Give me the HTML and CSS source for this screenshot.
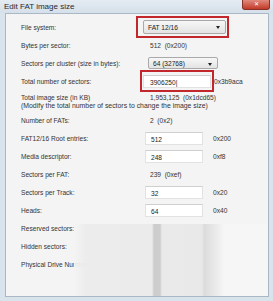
FILE: index.html
```html
<!DOCTYPE html>
<html lang="en">
  <head>
    <meta charset="UTF-8" />
    <title>Edit FAT image size</title>
    <link rel="stylesheet" href="styles.css">
  </head>
  <body>
    <div class="window">
      <header class="titlebar">
        <span class="title">Edit FAT image size</span>
        <span class="close">&#x2715;</span>
      </header>
      <section class="frame">
        <div class="content">
          <div class="row">
            <span class="label">File system:</span>
            <span class="mark">
              <span class="select select-wide">FAT 12/16<i class="arrow"></i></span>
            </span>
          </div>
          <div class="row">
            <span class="label">Bytes per sector:</span>
            <span class="value">512 &nbsp;(0x200)</span>
          </div>
          <div class="row">
            <span class="label">Sectors per cluster (size in bytes):</span>
            <span class="select select-small">64 (32768)<i class="arrow"></i></span>
          </div>
          <div class="row">
            <span class="label">Total number of sectors:</span>
            <span class="mark mark-input">
              <span class="input input-wide">3906250|</span>
            </span>
            <span class="hex hex-tight">0x3b9aca</span>
          </div>
          <div class="row row-short">
            <span class="label">Total image size (in KB)</span>
            <span class="value">1,953,125 &nbsp;(0x1dcd65)</span>
          </div>
          <div class="note">(Modify the total number of sectors to change the image size)</div>
          <div class="row">
            <span class="label">Number of FATs:</span>
            <span class="value">2 &nbsp;(0x2)</span>
          </div>
          <div class="row">
            <span class="label">FAT12/16 Root entries:</span>
            <span class="input">512</span>
            <span class="hex">0x200</span>
          </div>
          <div class="row">
            <span class="label">Media descriptor:</span>
            <span class="input">248</span>
            <span class="hex">0xf8</span>
          </div>
          <div class="row">
            <span class="label">Sectors per FAT:</span>
            <span class="value">239 &nbsp;(0xef)</span>
          </div>
          <div class="row">
            <span class="label">Sectors per Track:</span>
            <span class="input">32</span>
            <span class="hex">0x20</span>
          </div>
          <div class="row">
            <span class="label">Heads:</span>
            <span class="input">64</span>
            <span class="hex">0x40</span>
          </div>
          <div class="row">
            <span class="label">Reserved sectors:</span>
          </div>
          <div class="row">
            <span class="label">Hidden sectors:</span>
          </div>
          <div class="row">
            <span class="label">Physical Drive Number:</span>
          </div>
        </div>
        <!-- the dialog is fading out in the lower right corner -->
        <div class="fade"></div>
      </section>
    </div>
  </body>
</html>
```

FILE: styles.css
```css
html {
  box-sizing: border-box;
  font-family: "Liberation Sans", Arial, sans-serif;
  font-size: 6.6px;
}

*,
*:before,
*:after {
  box-sizing: inherit;
}

body {
  margin: 0;
  background: #fff;
}

.window {
  width: 273px;
  height: 301px;
  display: flex;
  flex-direction: column;
  background: #d9e3ec;
}

.titlebar {
  height: 13px;
  display: flex;
  justify-content: space-between;
  align-items: flex-start;
  background: linear-gradient(#e4ebf2, #d6e0ea);
  color: #1d2a36;
}

.title {
  padding: 2px 0 0 4px;
  font-size: 8px;
}

.close {
  width: 28px;
  height: 10px;
  margin-right: 3px;
  background: linear-gradient(#e08a7c, #c23a28);
  border: 1px solid #8a3026;
  border-top: 0;
  border-radius: 0 0 3px 3px;
  color: #fff;
  font-size: 6px;
  text-align: center;
  line-height: 9px;
}

/* frame around the dialog contents */
.frame {
  position: relative;
  flex-grow: 1;
  margin: 0 4px 4px 5px;
  border: 1px solid #aab8c6;
  background: #f4f4f4;
  display: flex;
}

.content {
  flex-grow: 1;
  padding: 4px 0 0 15px;
  color: #333;
}

.row {
  height: 18px;
  display: flex;
  align-items: center;
}

.row-short {
  height: 11px;
  align-items: flex-end;
}

.label {
  width: 122px;
  flex-shrink: 0;
}

.value {
  padding-left: 7px;
}

.note {
  height: 10px;
  padding-top: 1px;
  font-size: 6.9px;
}

.select {
  position: relative;
  height: 14px;
  display: flex;
  align-items: center;
  padding-left: 4px;
  border: 1px solid #a9a9a9;
  border-radius: 2px;
  background: linear-gradient(#f7f7f7, #e3e3e3);
  color: #222;
}

.select-wide {
  width: 83px;
}

.select-small {
  width: 70px;
  height: 12px;
  margin-left: 5px;
}

.arrow {
  position: absolute;
  right: 5px;
  top: 5px;
  border-left: 2.5px solid transparent;
  border-right: 2.5px solid transparent;
  border-top: 3px solid #222;
}

/* red highlight boxes around fields */
.mark {
  position: relative;
  display: flex;
}

.mark:before {
  content: "";
  position: absolute;
  left: -7px;
  right: -3px;
  top: -4px;
  bottom: -4px;
  border: 2px solid #c3272e;
}

.mark-input:before {
  left: -3px;
  right: -3px;
  top: -5px;
  bottom: -4px;
}

.input {
  width: 58px;
  height: 13px;
  margin-left: 2px;
  padding: 3px 0 0 5px;
  background: #fff;
  border: 1px solid #e2e2e2;
  border-top-color: #cfcfcf;
  color: #222;
}

.input-wide {
  width: 68px;
  margin-left: 0;
  padding-left: 6px;
}

.hex {
  padding-left: 10px;
}

.hex-tight {
  padding-left: 3px;
}

.fade {
  position: absolute;
  left: 68px;
  right: 0;
  top: 210px;
  bottom: 0;
  background:
    linear-gradient(90deg, transparent 78px, rgba(150, 150, 150, 0.35) 80px, rgba(150, 150, 150, 0.35) 86px, transparent 88px, transparent 128px, rgba(190, 190, 190, 0.3) 130px, transparent 150px),
    linear-gradient(90deg, rgba(244, 244, 244, 0) 0, rgba(236, 236, 236, 0.96) 12px, rgba(232, 232, 232, 0.96) 130px, rgba(246, 246, 246, 0.98) 150px),
    linear-gradient(rgba(244, 244, 244, 0), rgba(244, 244, 244, 0.9) 12px);
}
```
